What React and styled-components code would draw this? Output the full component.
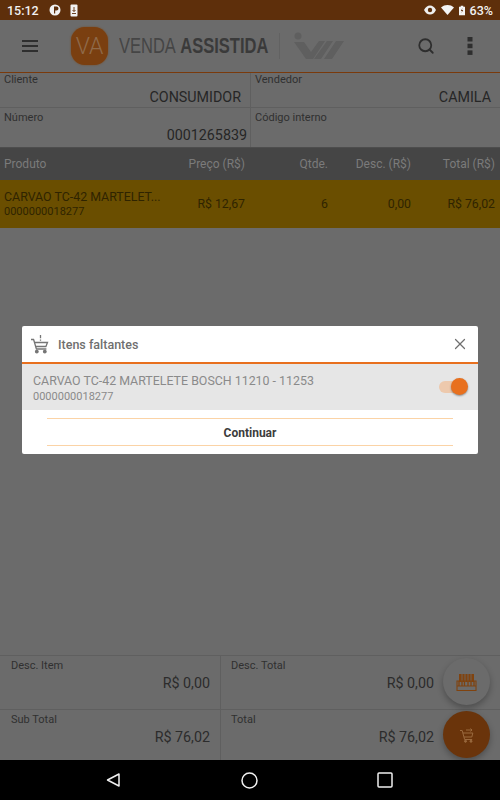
import React from "react";
import styled, { createGlobalStyle } from "styled-components";
import { Search, X } from "lucide-react";

const Global = createGlobalStyle`
  html, body { margin: 0; padding: 0; }
  body { font-family: Roboto, "Liberation Sans", sans-serif; background: #6b6b6b; }
`;

const Screen = styled.div`
  position: relative;
  display: flex;
  flex-direction: column;
  width: 500px;
  height: 800px;
  overflow: hidden;
  background: #6b6b6b;
`;

const StatusBar = styled.div`
  display: flex;
  align-items: center;
  flex: 0 0 20px;
  padding: 0 7px;
  background: #5e2f0b;
  color: #f2f2f2;
  font-size: 12.5px;
  font-weight: 500;
`;
const StatusLeft = styled.div`
  display: flex;
  align-items: center;
  gap: 9px;
  & span { margin-right: 1px; }
`;
const StatusRight = styled.div`
  display: flex;
  align-items: center;
  gap: 5px;
  margin-left: auto;
`;

const AppBar = styled.header`
  display: flex;
  align-items: center;
  flex: 0 0 52px;
  padding-left: 22px;
  border-bottom: 1px solid #7a3a0c;
  color: #2e2e2e;
  box-sizing: content-box;
`;
const LogoBadge = styled.div`
  display: flex;
  align-items: center;
  justify-content: center;
  width: 37px;
  height: 38px;
  margin-left: 33px;
  border-radius: 14px;
  background: #7a3f10;
  color: #8f6a4a;
  font-size: 23px;
  font-weight: 300;
  box-shadow: 0 0 2px #7a4a20;
`;
const LogoText = styled.div`
  width: 148px;
  margin-left: 11px;
  font-family: "Liberation Sans", sans-serif;
  font-size: 22px;
  color: #454545;
  white-space: nowrap;
  transform: scaleX(0.75);
  transform-origin: left center;
  & b { margin-left: 6px; color: #3a3a3a; }
`;
const LogoRule = styled.div`
  width: 1px;
  height: 26px;
  margin-left: 12px;
  background: #626262;
`;
const BarActions = styled.div`
  display: flex;
  align-items: center;
  gap: 32px;
  margin-left: auto;
  padding-right: 27px;
`;

const InfoGrid = styled.section`
  display: grid;
  grid-template-columns: 250px 250px;
  grid-template-rows: 35px 39px;
  flex: 0 0 74px;
`;
const InfoCell = styled.div`
  display: flex;
  flex-direction: column;
  box-sizing: border-box;
  padding: 0 ${(p) => (p.$tight ? 3 : 9)}px 0 4px;
  border-bottom: ${(p) => (p.$last ? "none" : "1px solid #5f5f5f")};
  border-left: ${(p) => (p.$right ? "1px solid #5f5f5f" : "none")};
`;
const InfoLabel = styled.span`
  font-size: 11px;
  line-height: 13px;
  color: #303030;
  margin-top: ${(p) => (p.$low ? 3 : 0)}px;
`;
const InfoValue = styled.span`
  align-self: flex-end;
  font-size: 14.3px;
  line-height: 17px;
  margin-top: 3px;
  color: #262626;
`;

const columns = "165px 76px 83px 83px 84px";
const TableHead = styled.div`
  display: grid;
  grid-template-columns: ${columns};
  align-items: center;
  box-sizing: border-box;
  flex: 0 0 33px;
  padding: 0 5px 0 4px;
  border-top: 1px solid #4d4d4d;
  background: #454545;
  color: #7b7b7b;
  font-size: 12px;
`;
const Cell = styled.span`
  text-align: ${(p) => (p.$left ? "left" : "right")};
`;
const TableRow = styled.div`
  display: grid;
  grid-template-columns: ${columns};
  align-items: center;
  flex: 0 0 48px;
  padding: 0 5px 0 4px;
  background: #6a4e00;
  color: #2f2400;
  font-size: 12.3px;
`;
const ProductName = styled.div`
  font-size: 12.4px;
  line-height: 15px;
  white-space: nowrap;
`;
const ProductCode = styled.div`
  font-size: 11px;
  line-height: 15px;
`;

const Spacer = styled.div`
  flex: 1;
`;

const Totals = styled.section`
  display: grid;
  grid-template-columns: 220px 280px;
  grid-template-rows: 54px 50px;
  flex: 0 0 105px;
  box-sizing: border-box;
  border-top: 1px solid #5f5f5f;
`;
const TotalCell = styled.div`
  display: flex;
  flex-direction: column;
  box-sizing: border-box;
  padding: 3px ${(p) => (p.$right ? 66 : 10)}px 0 ${(p) => (p.$right ? 10 : 11)}px;
  border-bottom: ${(p) => (p.$last ? "none" : "1px solid #5f5f5f")};
  border-left: ${(p) => (p.$right ? "1px solid #5f5f5f" : "none")};
`;
const TotalLabel = styled.span`
  font-size: 11px;
  line-height: 13px;
  color: #303030;
`;
const TotalValue = styled.span`
  align-self: flex-end;
  margin-top: 3px;
  font-size: 14.3px;
  line-height: 17px;
  color: #2c2c2c;
`;

const NavBar = styled.nav`
  display: flex;
  align-items: center;
  justify-content: center;
  gap: 119px;
  flex: 0 0 40px;
  padding-right: 2px;
  background: #000;
  & svg:first-child { margin-right: 2px; }
`;

const Fab = styled.button`
  position: absolute;
  right: 10px;
  bottom: ${(p) => p.$bottom}px;
  display: flex;
  align-items: center;
  justify-content: center;
  width: 47px;
  height: 47px;
  padding: 0;
  border: 0;
  border-radius: 50%;
  background: ${(p) => (p.$primary ? "#6a340b" : "#6b6b6b")};
  box-shadow: 0 3px 6px rgba(0, 0, 0, 0.28);
`;

const Dialog = styled.div`
  position: absolute;
  left: 22px;
  top: 326px;
  width: 456px;
  height: 128px;
  display: flex;
  flex-direction: column;
  border-radius: 2px;
  background: #fff;
  overflow: hidden;
`;
const DialogHead = styled.div`
  display: flex;
  align-items: center;
  box-sizing: content-box;
  flex: 0 0 36px;
  padding: 0 9px 0 8px;
  border-bottom: 2px solid #e8701e;
  color: #757575;
`;
const DialogTitle = styled.span`
  margin-left: 8px;
  padding-top: 1px;
  font-size: 12.5px;
  font-weight: 500;
  color: #6f6f6f;
`;
const CloseBtn = styled.div`
  display: flex;
  margin-left: auto;
  color: #6f6f6f;
`;
const MissingRow = styled.div`
  display: flex;
  align-items: center;
  justify-content: space-between;
  flex: 0 0 46px;
  padding: 0 10px 0 11px;
  background: #e6e6e6;
  color: #8a8a8a;
`;
const MissingText = styled.div`
  margin-top: 2px;
`;
const MissingName = styled.div`
  font-size: 12.4px;
  line-height: 16px;
`;
const MissingCode = styled.div`
  font-size: 11px;
  line-height: 15px;
`;
const Toggle = styled.div`
  position: relative;
  width: 28px;
  height: 12px;
  margin-right: 1px;
  border-radius: 6px;
  background: #edc9ad;
`;
const Knob = styled.div`
  position: absolute;
  right: -1px;
  top: -3px;
  width: 17px;
  height: 17px;
  border-radius: 50%;
  background: #e8701e;
  box-shadow: 0 1px 2px rgba(0, 0, 0, 0.4);
`;
const ContinueBtn = styled.button`
  display: block;
  height: 28px;
  margin: 8px 25px 0;
  padding: 1px 0 0;
  border: 0;
  border-top: 1px solid #fbd3a6;
  border-bottom: 1px solid #fbd3a6;
  background: #fff;
  font-family: inherit;
  font-size: 12px;
  font-weight: 700;
  color: #3c3c3c;
`;

const CartIcon = () => (
  <svg width="20" height="20" viewBox="0 0 20 20" fill="none" stroke="currentColor" strokeWidth="1.3">
    <path d="M1 5.500h2.600l2.800 9.500h10" />
    <path d="M4.500 8.500h13l-1.600 4H5.600" />
    <circle cx="6.800" cy="17.600" r="1.300" fill="currentColor" />
    <circle cx="14.800" cy="17.600" r="1.300" fill="currentColor" />
    <path d="M10.500 1v3.200M10.500 5.400v1.400" />
  </svg>
);

const CartArrowIcon = () => (
  <svg width="16" height="16" viewBox="0 0 16 16" fill="none" stroke="#9a6a3f" strokeWidth="1">
    <path d="M1 3.500h2.200L5.600 12.500h7.600" />
    <path d="M3.800 6h10l-1 4H5" />
    <circle cx="6.500" cy="14.300" r="1" fill="#9a6a3f" />
    <circle cx="12" cy="14.300" r="1" fill="#9a6a3f" />
    <path d="M7 3h6M11.500 1.500 13 3l-1.500 1.500" />
  </svg>
);

const ShelfIcon = () => (
  <svg width="21" height="18" viewBox="0 0 21 18" fill="none">
    <path d="M3 1h15v8H3z" fill="#80430f" />
    <path d="M6 1v8M9 1v8M12 1v8M15 1v8" stroke="#6b6b6b" strokeWidth="0.8" />
    <path d="M1 8h19v9.500H1zM1 13h19" stroke="#80430f" strokeWidth="1.100" />
    <path d="M3 8v5M6 8v5M8.500 8v5M12 8v5M15 8v5M18 8v5" stroke="#80430f" strokeWidth="1.300" />
  </svg>
);

const WlsLogo = () => (
  <svg width="50" height="28" viewBox="0 0 50 28" fill="#5f5f5f" style={{ marginLeft: 14 }}>
    <circle cx="4" cy="4" r="3.500" />
    <path d="M0 10h10l7 10 8-11h6L19 27h-7z" />
    <path d="M33 9h6L27 27h-7z" />
    <path d="M42 9h8L38 27h-8z" />
  </svg>
);

const EyeIcon = () => (
  <svg width="12" height="10" viewBox="0 0 12 10" fill="#eee">
    <path d="M0 5C1.500 2 3.500.5 6 .5S10.500 2 12 5c-1.500 3-3.500 4.500-6 4.500S1.500 8 0 5z" />
    <circle cx="6" cy="5" r="2.200" fill="#5e2f0b" />
  </svg>
);

const WifiIcon = () => (
  <svg width="13" height="10" viewBox="0 0 13 10" fill="#f4f4f4">
    <path d="M0 2.500C3.600-.8 9.400-.8 13 2.500L6.500 10z" />
  </svg>
);

const BatteryIcon = () => (
  <svg width="6" height="11" viewBox="0 0 7 11">
    <path d="M2 0h3v1h2v10H0V1h2z" fill="#f4f4f4" />
    <path d="M4 2.500 2.200 6h1.300L3 8.500 4.800 5H3.500z" fill="#5e2f0b" />
  </svg>
);

const PIcon = () => (
  <svg width="12" height="12" viewBox="0 0 12 12">
    <circle cx="6" cy="6" r="5.500" fill="#f2f2f2" />
    <path d="M5 2.500h2.500a2 2 0 0 1 0 4H6.200v3H5z" fill="#5e2f0b" />
  </svg>
);

const PhoneIcon = () => (
  <svg width="8" height="13" viewBox="0 0 8 13" fill="none">
    <rect x="0.500" y="0.500" width="7" height="12" rx="1" fill="#f2f2f2" />
    <path d="M4 3v4.500M2.500 6 4 7.500 5.500 6M2 9.500h4" stroke="#5e2f0b" strokeWidth="0.900" />
  </svg>
);

const MenuIcon = () => (
  <svg width="16" height="12" viewBox="0 0 16 12" fill="#2e2e2e">
    <rect y="0" width="16" height="2" />
    <rect y="5" width="16" height="2" />
    <rect y="10" width="16" height="2" />
  </svg>
);

const MoreIcon = () => (
  <svg width="6" height="18" viewBox="0 0 6 18" fill="#2e2e2e">
    <rect x="0.500" y="0" width="5" height="4.500" />
    <rect x="0.500" y="6.700" width="5" height="4.500" />
    <rect x="0.500" y="13.400" width="5" height="4.500" />
  </svg>
);

const BackIcon = () => (
  <svg width="14" height="14" viewBox="0 0 14 14" fill="none" stroke="#f0f0f0" strokeWidth="1.500">
    <path d="M13 1v12L1.500 7z" strokeLinejoin="round" />
  </svg>
);
const HomeIcon = () => (
  <svg width="17" height="17" viewBox="0 0 17 17" fill="none" stroke="#f0f0f0" strokeWidth="1.500">
    <circle cx="8.500" cy="8.500" r="7.500" />
  </svg>
);
const SquareIcon = () => (
  <svg width="16" height="16" viewBox="0 0 16 16" fill="none" stroke="#f0f0f0" strokeWidth="1.500">
    <rect x="1" y="1" width="14" height="14" rx="1" />
  </svg>
);

export default function App() {
  return (
    <Screen>
      <Global />
      <StatusBar>
        <StatusLeft>
          <span>15:12</span>
          <PIcon />
          <PhoneIcon />
        </StatusLeft>
        <StatusRight>
          <EyeIcon />
          <WifiIcon />
          <BatteryIcon />
          <span>63%</span>
        </StatusRight>
      </StatusBar>

      <AppBar>
        <MenuIcon />
        <LogoBadge>VA</LogoBadge>
        <LogoText>
          VENDA<b>ASSISTIDA</b>
        </LogoText>
        <LogoRule />
        <WlsLogo />
        <BarActions>
          <Search size={18} strokeWidth={2.4} />
          <MoreIcon />
        </BarActions>
      </AppBar>

      <InfoGrid>
        <InfoCell>
          <InfoLabel>Cliente</InfoLabel>
          <InfoValue>CONSUMIDOR</InfoValue>
        </InfoCell>
        <InfoCell $right>
          <InfoLabel>Vendedor</InfoLabel>
          <InfoValue>CAMILA</InfoValue>
        </InfoCell>
        <InfoCell $last $tight>
          <InfoLabel $low>Número</InfoLabel>
          <InfoValue>0001265839</InfoValue>
        </InfoCell>
        <InfoCell $last $right>
          <InfoLabel $low>Código interno</InfoLabel>
        </InfoCell>
      </InfoGrid>

      <TableHead>
        <Cell $left>Produto</Cell>
        <Cell>Preço (R$)</Cell>
        <Cell>Qtde.</Cell>
        <Cell>Desc. (R$)</Cell>
        <Cell>Total (R$)</Cell>
      </TableHead>
      <TableRow>
        <div>
          <ProductName>CARVAO TC-42 MARTELET...</ProductName>
          <ProductCode>0000000018277</ProductCode>
        </div>
        <Cell>R$ 12,67</Cell>
        <Cell>6</Cell>
        <Cell>0,00</Cell>
        <Cell>R$ 76,02</Cell>
      </TableRow>

      <Spacer />

      <Totals>
        <TotalCell>
          <TotalLabel>Desc. Item</TotalLabel>
          <TotalValue>R$ 0,00</TotalValue>
        </TotalCell>
        <TotalCell $right>
          <TotalLabel>Desc. Total</TotalLabel>
          <TotalValue>R$ 0,00</TotalValue>
        </TotalCell>
        <TotalCell $last>
          <TotalLabel>Sub Total</TotalLabel>
          <TotalValue>R$ 76,02</TotalValue>
        </TotalCell>
        <TotalCell $last $right>
          <TotalLabel>Total</TotalLabel>
          <TotalValue>R$ 76,02</TotalValue>
        </TotalCell>
      </Totals>

      <NavBar>
        <BackIcon />
        <HomeIcon />
        <SquareIcon />
      </NavBar>

      <Fab $bottom={95}>
        <ShelfIcon />
      </Fab>
      <Fab $bottom={42} $primary>
        <CartArrowIcon />
      </Fab>

      <Dialog>
        <DialogHead>
          <CartIcon />
          <DialogTitle>Itens faltantes</DialogTitle>
          <CloseBtn>
            <X size={18} strokeWidth={1.6} />
          </CloseBtn>
        </DialogHead>
        <MissingRow>
          <MissingText>
            <MissingName>CARVAO TC-42 MARTELETE BOSCH 11210 - 11253</MissingName>
            <MissingCode>0000000018277</MissingCode>
          </MissingText>
          <Toggle>
            <Knob />
          </Toggle>
        </MissingRow>
        <ContinueBtn>Continuar</ContinueBtn>
      </Dialog>
    </Screen>
  );
}
